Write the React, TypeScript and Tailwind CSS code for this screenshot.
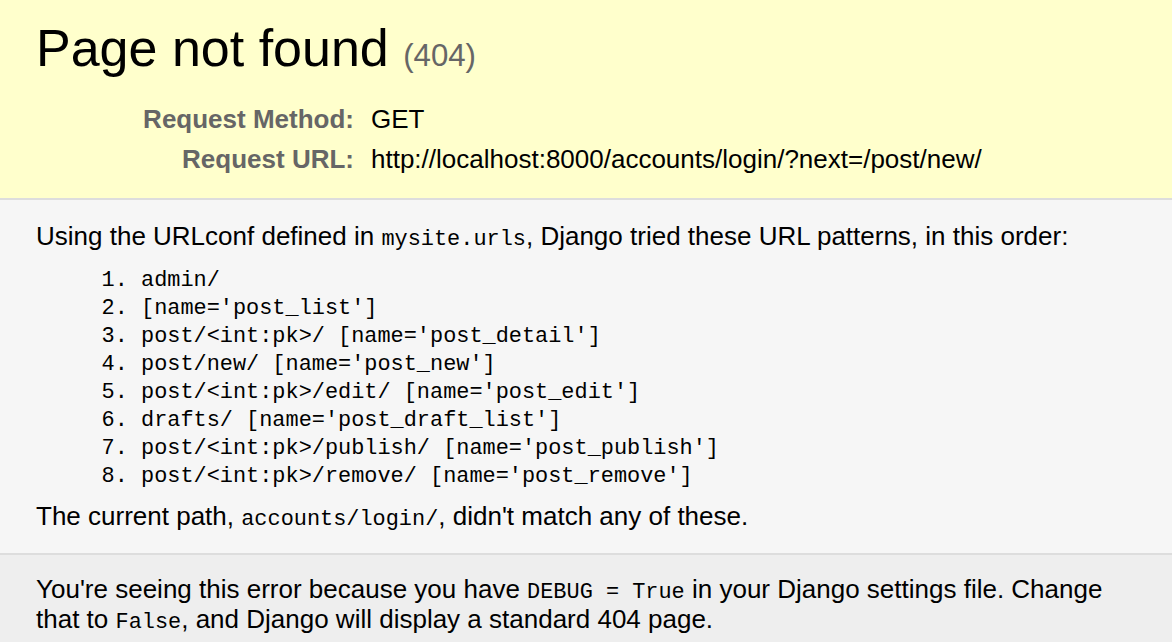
const PATTERNS = [
  "admin/",
  "[name='post_list']",
  "post/<int:pk>/ [name='post_detail']",
  "post/new/ [name='post_new']",
  "post/<int:pk>/edit/ [name='post_edit']",
  "drafts/ [name='post_draft_list']",
  "post/<int:pk>/publish/ [name='post_publish']",
  "post/<int:pk>/remove/ [name='post_remove']",
];

function Code({ children }: { children: React.ReactNode }) {
  return <code className="font-['Liberation_Mono',monospace] text-[21.9px] leading-none">{children}</code>;
}

export default function App() {
  return (
    <div className="min-h-[642px] bg-[#eeeeee] font-['Liberation_Sans',Arial,sans-serif] text-[26px] leading-[30px] text-black">
      <div id="summary" className="bg-[#ffffcc] border-b-2 border-[#dddddd] px-[36px] pt-[18px] pb-[19px]">
        <h1 className="text-[52px] leading-[60px] font-normal mb-[21px]">
          Page not found <span className="text-[31.2px] leading-none text-[#666666]">(404)</span>
        </h1>
        <div className="grid grid-cols-[318px_1fr] gap-x-[17px]">
          <div className="text-right font-bold text-[#666666] py-[5px]">Request Method:</div>
          <div className="py-[5px]">GET</div>
          <div className="text-right font-bold text-[#666666] py-[5px]">Request URL:</div>
          <div className="py-[5px]">http://localhost:8000/accounts/login/?next=/post/new/</div>
        </div>
      </div>

      <div id="info" className="bg-[#f6f6f6] border-b-2 border-[#dddddd] px-[36px] pt-[21px] pb-[22px]">
        <p>
          Using the URLconf defined in <Code>mysite.urls</Code>, Django tried these URL patterns, in this order:
        </p>
        <ol className="list-decimal ml-[105px] mt-[16px] mb-[10px] font-['Liberation_Mono',monospace] text-[21.9px] leading-[28px]">
          {PATTERNS.map((p) => (
            <li key={p} className="whitespace-pre">
              {p}
            </li>
          ))}
        </ol>
        <p>
          The current path, <Code>accounts/login/</Code>, didn't match any of these.
        </p>
      </div>

      <div id="explanation" className="px-[36px] pt-[19px] pb-[20px]">
        <p>
          You're seeing this error because you have <Code>DEBUG = True</Code> in your Django settings file. Change
          that to <Code>False</Code>, and Django will display a standard 404 page.
        </p>
      </div>
    </div>
  );
}
